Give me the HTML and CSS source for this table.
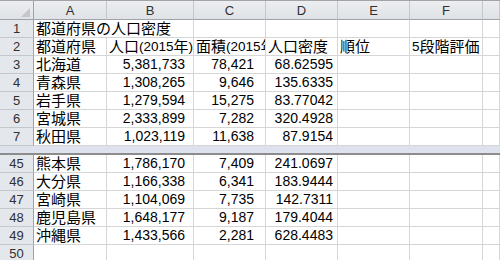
FILE: index.html
```html
<!DOCTYPE html>
<html lang="ja">
<head>
<meta charset="utf-8">
<link rel="stylesheet" href="styles.css">
</head>
<body>
<div class="sheet">
  <div class="row head">
    <div class="h corner"><svg width="9" height="9" viewBox="0 0 9 9"><polygon points="9,0 9,9 0,9" fill="#c6c6c6"/></svg></div>
    <div class="h">A</div><div class="h">B</div><div class="h">C</div><div class="h">D</div><div class="h">E</div><div class="h">F</div><div class="h last"></div>
  </div>
  <div class="row">
    <div class="rh">1</div><div class="c span2">都道府県の人口密度</div><div class="c"></div><div class="c"></div><div class="c"></div><div class="c"></div><div class="c"></div>
  </div>
  <div class="row">
    <div class="rh">2</div><div class="c">都道府県</div><div class="c">人口<span class="lat">(2015</span>年<span class="lat">)</span></div><div class="c">面積<span class="lat">(2015</span>年<span class="lat">)</span></div><div class="c">人口密度</div><div class="c">順位</div><div class="c"><span class="lat">5</span>段階評価</div><div class="c"></div>
  </div>
  <div class="row"><div class="rh">3</div><div class="c">北海道</div><div class="c num nb">5,381,733</div><div class="c num nc">78,421</div><div class="c num nd">68.62595</div><div class="c"></div><div class="c"></div><div class="c"></div></div>
  <div class="row"><div class="rh">4</div><div class="c">青森県</div><div class="c num nb">1,308,265</div><div class="c num nc">9,646</div><div class="c num nd">135.6335</div><div class="c"></div><div class="c"></div><div class="c"></div></div>
  <div class="row"><div class="rh">5</div><div class="c">岩手県</div><div class="c num nb">1,279,594</div><div class="c num nc">15,275</div><div class="c num nd">83.77042</div><div class="c"></div><div class="c"></div><div class="c"></div></div>
  <div class="row"><div class="rh">6</div><div class="c">宮城県</div><div class="c num nb">2,333,899</div><div class="c num nc">7,282</div><div class="c num nd">320.4928</div><div class="c"></div><div class="c"></div><div class="c"></div></div>
  <div class="row"><div class="rh">7</div><div class="c">秋田県</div><div class="c num nb">1,023,119</div><div class="c num nc">11,638</div><div class="c num nd">87.9154</div><div class="c"></div><div class="c"></div><div class="c"></div></div>
  <div class="split"></div>
  <div class="row"><div class="rh">45</div><div class="c">熊本県</div><div class="c num nb">1,786,170</div><div class="c num nc">7,409</div><div class="c num nd">241.0697</div><div class="c"></div><div class="c"></div><div class="c"></div></div>
  <div class="row"><div class="rh">46</div><div class="c">大分県</div><div class="c num nb">1,166,338</div><div class="c num nc">6,341</div><div class="c num nd">183.9444</div><div class="c"></div><div class="c"></div><div class="c"></div></div>
  <div class="row"><div class="rh">47</div><div class="c">宮崎県</div><div class="c num nb">1,104,069</div><div class="c num nc">7,735</div><div class="c num nd">142.7311</div><div class="c"></div><div class="c"></div><div class="c"></div></div>
  <div class="row"><div class="rh">48</div><div class="c">鹿児島県</div><div class="c num nb">1,648,177</div><div class="c num nc">9,187</div><div class="c num nd">179.4044</div><div class="c"></div><div class="c"></div><div class="c"></div></div>
  <div class="row"><div class="rh">49</div><div class="c">沖縄県</div><div class="c num nb">1,433,566</div><div class="c num nc">2,281</div><div class="c num nd">628.4483</div><div class="c"></div><div class="c"></div><div class="c"></div></div>
  <div class="row"><div class="rh">50</div><div class="c"></div><div class="c"></div><div class="c"></div><div class="c"></div><div class="c"></div><div class="c"></div><div class="c"></div></div>
</div>
</body>
</html>
```
FILE: styles.css
```css
html, body {
  margin: 0;
  padding: 0;
  background: #ffffff;
  overflow: hidden;
}
.sheet {
  width: 500px;
  height: 260px;
  overflow: hidden;
  font-family: "Liberation Sans", "Noto Sans CJK JP", sans-serif;
  color: #000;
}
.row {
  display: grid;
  grid-template-columns: 34px 73px 87px 72px 72px 72px 73px 1fr;
  height: 18px;
}
.row.head {
  height: 20px;
  border-top: 1px solid #a3a3a3;
  box-sizing: border-box;
}
.h {
  box-sizing: border-box;
  background: linear-gradient(#eceef1, #dfe2e6);
  border-right: 1px solid #c4c7cc;
  border-bottom: 1px solid #9ea3a9;
  display: flex;
  align-items: center;
  justify-content: center;
  font-size: 13px;
  color: #303030;
}
.h.corner {
  justify-content: flex-end;
  align-items: flex-end;
  padding: 0 3px 2px 0;
  border-right-color: #9ea3a9;
}
.rh {
  box-sizing: border-box;
  background: #e4e7eb;
  border-right: 1px solid #9ea3a9;
  border-bottom: 1px solid #c4c7cc;
  display: flex;
  align-items: center;
  justify-content: center;
  font-size: 13px;
  color: #303030;
}
.c {
  box-sizing: border-box;
  border-right: 1px solid #d6d6d6;
  border-bottom: 1px solid #d6d6d6;
  display: flex;
  align-items: center;
  padding: 0 0 0 2px;
  font-size: 15px;
  white-space: nowrap;
  overflow: hidden;
  line-height: 17px;
}
.lat {
  font-size: 13.5px;
}
.span2 {
  grid-column: span 2;
}
.num {
  justify-content: flex-end;
  font-size: 14px;
}
.nb { padding-right: 8px; }
.nc { padding-right: 11px; }
.nd { padding-right: 4px; }
.split {
  height: 7px;
  background: #dde2ec;
  border-bottom: 2px solid #8c8c8c;
}
```
